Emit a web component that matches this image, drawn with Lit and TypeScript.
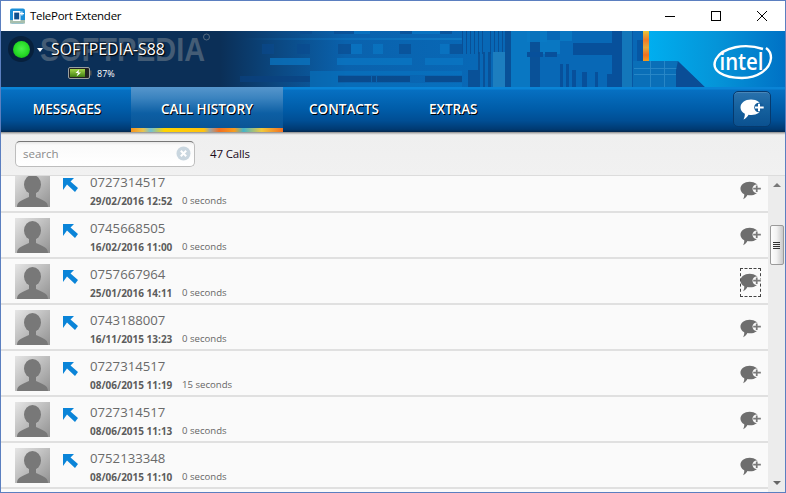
import { LitElement, html, css, svg } from "lit";
import { customElement } from "lit/decorators.js";

const ROWS = [
  ["0727314517", "29/02/2016 12:52", "0 seconds"],
  ["0745668505", "16/02/2016 11:00", "0 seconds"],
  ["0757667964", "25/01/2016 14:11", "0 seconds"],
  ["0743188007", "16/11/2015 13:23", "0 seconds"],
  ["0727314517", "08/06/2015 11:19", "15 seconds"],
  ["0727314517", "08/06/2015 11:13", "0 seconds"],
  ["0752133348", "08/06/2015 11:10", "0 seconds"],
];

const chat = (fill: string, cut: string, plus: string) => html`
  <svg class="chat-svg" viewBox="0 0 25 21">
    <path fill=${fill} d="M11 0.5C17 0.5 21.5 4 21.5 8.5C21.5 13 17 16 11.5 16C10.5 16 9.5 16 8.5 15.7C7.5 17.5 5.5 19.8 3.5 20.5C4.5 18.5 5 16.5 4.8 14.8C2 13.3 0.5 11 0.5 8.5C0.5 4 5 0.5 11 0.5Z"/>
    <circle cx="19" cy="8.5" r="4.8" fill=${cut}/>
    <path fill=${plus} d="M18 4.800H20V7.500H23.700V9.500H20V12.200H18V9.500H15V7.500H18Z"/>
  </svg>`;

const rects = (fill: string, op: number, list: number[][]) =>
  list.map(([x, y, w, h]) => svg`<rect x=${x} y=${y} width=${w} height=${h} fill=${fill} opacity=${op}/>`);

@customElement("app-root")
export class AppRoot extends LitElement {
  static styles = css`
    :host {
      display: flex;
      flex-direction: column;
      width: 786px;
      height: 493px;
      box-sizing: border-box;
      border: 1px solid #5b7fc0;
      background: #fafafa;
      font-family: "Open Sans", "Noto Sans", sans-serif;
      overflow: hidden;
    }
    .titlebar {
      height: 30px;
      flex: none;
      display: flex;
      align-items: center;
      background: #fff;
      padding-left: 9px;
      font-size: 11.5px;
      letter-spacing: -0.28px;
      color: #000;
    }
    .app-icon { width: 15px; height: 16px; margin-right: 5px; margin-top: -1px; }
    .title { flex: 1; margin-top: -1px; }
    .winctl { width: 46px; height: 30px; display: flex; align-items: center; justify-content: center; }
    .winctl svg { width: 12px; height: 12px; }
    .winctl-group { display: flex; margin-right: 0; }

    .banner {
      position: relative;
      height: 56px;
      flex: none;
      box-sizing: border-box;
      padding: 7px 0 0 7px;
      color: #fff;
      background: #0b2f57;
    }
    .banner-art { position: absolute; left: -1px; top: 0; width: 786px; height: 56px; }
    .device { position: relative; display: flex; align-items: center; height: 22px; }
    .led {
      width: 26px; height: 26px; border-radius: 50%;
      background: #07203c;
      display: flex; align-items: center; justify-content: center;
      margin-right: 1px;
    }
    .led i {
      width: 17px; height: 17px; border-radius: 50%; display: block;
      background: radial-gradient(circle at 50% 45%, #4cf04c 0, #25d925 55%, #119a11 100%);
    }
    .caret {
      width: 0; height: 0; margin: 2px 8px 0 2px;
      border-left: 3.5px solid transparent; border-right: 3.5px solid transparent;
      border-top: 4px solid #fff;
    }
    .name {
      font-size: 15.8px; font-weight: 400;
      text-shadow: 1px 1px 1px #000, 0 0 2px #000;
    }
    .power { position: relative; display: flex; align-items: center; margin: 7px 0 0 60px; font-size: 9px; height: 12px; }
    .power svg { width: 24px; height: 12px; margin-right: 5px; }

    .nav {
      height: 45px;
      flex: none;
      display: flex;
      align-items: stretch;
      padding-left: 0;
      background: linear-gradient(#0a84d6 0, #0a84d6 2px, #0670c2 3px, #005ca8 50%, #004e94 75%, #003a72 94%, #04284e 100%);
    }
    .tab {
      display: flex; align-items: center; justify-content: center;
      font-size: 13.5px; font-weight: 600; color: #fff;
      letter-spacing: 0;
      text-shadow: 1px 1px 0 #000;
      box-sizing: border-box;
      padding-bottom: 1px;
    }
    .t1 { margin-left: 31px; margin-right: 29px; width: 70px; }
    .t2 {
      width: 152px; position: relative;
      background: linear-gradient(#5696cc 0, #3a83bf 25%, #0d5fa4 58%, #0a5596 90%);
    }
    .t2::after {
      content: ""; position: absolute; left: 0; right: 0; bottom: 0; height: 4px;
      background: linear-gradient(90deg, #f7941d 0, #e9c34d 8%, #6fc1d6 13%, #ffd400 22%, #ffc20e 48%, #9aa5a8 52%, #f26f21 58%, #f79c1d 68%, #43b5c9 74%, #f1c93b 86%, #f26f21 100%);
    }
    .t3 { margin-left: 26px; margin-right: 50px; width: 70px; }
    .spacer { flex: 1; }
    .compose {
      width: 38px; height: 36px; margin: 4px 14px 0 0;
      box-sizing: border-box;
      border: 1px solid #063a6e; border-radius: 5px;
      background: linear-gradient(#2a72ad 0, #16629f 45%, #0b5190 100%);
      box-shadow: inset 0 1px 0 rgba(255,255,255,.15);
      display: flex; align-items: center; justify-content: center;
    }
    .compose .chat-svg { width: 25px; height: 21px; }

    .toolbar {
      height: 44px;
      flex: none;
      box-sizing: border-box;
      display: flex;
      align-items: center;
      padding: 0 0 0 14px;
      background: linear-gradient(#8a8a8a 0, #d8d8d8 2px, #efefef 3px, #f1f1f1 100%);
      border-bottom: 1px solid #dcdcdc;
    }
    .search {
      width: 180px; height: 26px;
      box-sizing: border-box;
      display: flex; align-items: center; justify-content: space-between;
      padding: 0 3px 0 7px;
      border: 1px solid #bdbdbd; border-top-color: #777; border-radius: 5px;
      background: linear-gradient(#e8e8e8 0, #fafafa 3px, #fff 100%);
      font-size: 11.5px; color: #8b8b8b;
    }
    .search svg { width: 15px; height: 15px; }
    .count { margin-left: 15px; font-size: 11.5px; color: #1a0a1a; letter-spacing: -0.15px; }

    .body { flex: 1; display: flex; min-height: 0; }
    .list { flex: 1; overflow: hidden; }
    .rows { margin-top: -9px; }
    .row {
      height: 46px;
      box-sizing: border-box;
      display: flex;
      align-items: flex-start;
      padding: 5px 6px 0 14px;
      border-bottom: 2px solid #e0e0e0;
      background: #fafafa;
      color: #666;
    }
    .avatar { width: 35px; height: 35px; flex: none; margin-right: 13px; }
    .dir { width: 15px; height: 14px; flex: none; margin: 6px 12px 0 0; }
    .info { flex: 1; }
    .num { font-size: 13.2px; line-height: 18px; color: #6a6a6a; margin-top: 1px; }
    .meta { display: flex; font-size: 9.6px; line-height: 14px; margin-top: 3px; color: #666; }
    .date { font-weight: 700; font-size: 10px; width: 92px; color: #5c5c5c; }
    .act {
      width: 21px; height: 29px; flex: none;
      box-sizing: border-box;
      display: flex; align-items: center; justify-content: center;
      margin: 4px 1px 0 0;
      border: 1px dashed transparent;
      padding-top: 0;
    }
    .act.focus { border-color: #444; }
    .act .chat-svg { width: 22px; height: 19px; flex: none; margin-left: 1px; }

    .scroll {
      width: 17px; flex: none; position: relative;
      background: #ececec;
      display: flex; flex-direction: column; align-items: center;
    }
    .up, .down { width: 0; height: 0; border-left: 4px solid transparent; border-right: 4px solid transparent; }
    .up { border-bottom: 4px solid #777; margin-top: 7px; }
    .down { border-top: 4px solid #666; margin-top: 216px; }
    .thumb {
      width: 14px; height: 40px; margin-top: 38px;
      box-sizing: border-box;
      border: 1px solid #9a9a9a; border-radius: 2px;
      background: linear-gradient(90deg, #fdfdfd 0, #f2f2f2 45%, #c9c9c9 100%);
      display: flex; flex-direction: column; align-items: center; justify-content: center; gap: 1px;
    }
    .thumb i { width: 7px; height: 1px; background: #333; display: block; }
  `;

  private bannerArt() {
    return svg`
      <svg class="banner-art" viewBox="0 31 786 56">
        <defs>
          <linearGradient id="base" x1="0" x2="1" y1="0" y2="0">
            <stop offset="0.28" stop-color="#0b2f57"/>
            <stop offset="0.36" stop-color="#0b4a85"/>
            <stop offset="0.44" stop-color="#0a62ad"/>
            <stop offset="0.6" stop-color="#0868b6"/>
            <stop offset="1" stop-color="#0868b6"/>
          </linearGradient>
          <linearGradient id="cyan" x1="0" x2="1" y1="0" y2="0">
            <stop offset="0" stop-color="#00aeef"/>
            <stop offset="0.5" stop-color="#0594d8"/>
            <stop offset="1" stop-color="#0071c5"/>
          </linearGradient>
          <linearGradient id="hot" x1="0" x2="0" y1="0" y2="1">
            <stop offset="0" stop-color="#e8c53a"/>
            <stop offset="0.3" stop-color="#f07a28"/>
            <stop offset="0.55" stop-color="#e4a83a"/>
            <stop offset="0.8" stop-color="#f0701f"/>
            <stop offset="1" stop-color="#f59c1a"/>
          </linearGradient>
          <linearGradient id="fade" x1="0" x2="1" y1="0" y2="0">
            <stop offset="0" stop-color="#0f78c2" stop-opacity="0"/>
            <stop offset="1" stop-color="#0f78c2" stop-opacity="1"/>
          </linearGradient>
        </defs>
        <rect x="0" y="31" width="786" height="56" fill="url(#base)"/>
        <text x="40" y="61" font-family="Liberation Sans" font-weight="700" font-size="34" textLength="165" lengthAdjust="spacingAndGlyphs" fill="#74818f" opacity="0.55">SOFTPEDIA</text>
        <circle cx="206.5" cy="37" r="3" fill="none" stroke="#74818f" stroke-width="1" opacity="0.7"/>
        <rect x="240" y="38" width="222" height="2" fill="url(#fade)"/>
        ${rects("#0a4a8e", 0.6, [[262, 44, 12, 10], [297, 44, 13, 10], [338, 44, 13, 10], [399, 44, 12, 10], [450, 44, 12, 10], [300, 31, 12, 3], [334, 31, 20, 3], [400, 31, 12, 3], [440, 31, 12, 3]])}
        ${rects("#0a77c4", 0.7, [[351, 44, 11, 10], [373, 44, 10, 10], [440, 44, 9, 10], [337, 58, 75, 7], [425, 58, 38, 7], [270, 58, 40, 7], [354, 31, 16, 3], [412, 31, 28, 3]])}
        ${rects("#0a4180", 0.7, [[240, 76, 70, 6], [338, 76, 33, 6], [372, 76, 4, 6], [377, 76, 33, 6], [425, 76, 37, 6]])}
        ${rects("#0877c2", 0.55, [[338, 71, 124, 4], [338, 83, 124, 4], [310, 71, 28, 16]])}
        ${rects("#0a4a8e", 0.8, [[462, 31, 1, 23], [466, 31, 1, 23], [470, 31, 1, 23], [474, 31, 1, 23], [478, 31, 1, 23], [482, 31, 1, 23], [490, 31, 1, 23], [494, 31, 1, 23], [498, 31, 1, 23], [502, 31, 1, 23]])}
        ${rects("#0a4a8e", 0.75, [[478, 52, 2, 35], [483, 52, 2, 35], [488, 52, 3, 35], [505, 31, 6, 56], [530, 31, 10, 56], [468, 70, 10, 17]])}
        ${rects("#1f80c0", 0.95, [[493, 52, 12, 35]])}
        ${rects("#0a7ac6", 0.8, [[511, 31, 19, 56], [540, 40, 20, 14], [560, 31, 12, 10], [527, 31, 20, 11]])}
        ${rects("#07509b", 1, [[573, 43, 39, 12], [612, 31, 10, 56], [527, 52, 16, 5], [545, 52, 12, 5], [560, 64, 3, 23], [566, 64, 3, 23], [572, 70, 4, 17], [582, 72, 5, 15], [595, 72, 3, 15], [607, 74, 5, 13]])}
        ${rects("#1377ba", 1, [[622, 31, 10, 56]])}
        ${rects("#07509b", 0.7, [[632, 31, 1, 56], [637, 40, 6, 21]])}
        <rect x="633" y="61" width="72" height="26" fill="#0a6fb8"/>
        ${rects("#2a88c8", 0.9, [[634, 68, 44, 1], [634, 74, 54, 1], [650, 61, 1, 26], [664, 61, 1, 26]])}
        <polygon points="678,61 705,87 676,87 676,70" fill="#0a4d96"/>
        <polygon points="649,31 786,31 786,87 705,87 678,61 649,61" fill="url(#cyan)"/>
        <rect x="643" y="31" width="6" height="30" fill="url(#hot)"/>
        <text x="719.5" y="70" font-family="Open Sans" font-weight="600" font-size="23.5" textLength="44" lengthAdjust="spacingAndGlyphs" fill="#fff">intel</text>
        <path d="M763 49C745 43 723 47 716 59C710 71 724 78 742 78C757 78 770 70 771 58C771 54 769 50 766 48" fill="none" stroke="#fff" stroke-width="2.4"/>
      </svg>`;
  }

  render() {
    return html`
      <div class="titlebar">
        <svg class="app-icon" viewBox="0 0 15 16">
          <rect x="0" y="0.5" width="15" height="15" rx="2" fill="#1a8fd8"/>
          <rect x="0" y="12" width="15" height="3.5" fill="#a8bfae"/>
          <rect x="3" y="3" width="7.5" height="10" fill="#fff"/>
          <rect x="4.2" y="4.6" width="5" height="6.8" fill="#0d4f8f"/>
          <path d="M11.3 3.5H12.5V5H14V6.200H12.500V7.600H11.300V6.200H10V5H11.300Z" fill="#fff"/>
        </svg>
        <span class="title">TelePort Extender</span>
        <div class="winctl-group">
          <div class="winctl"><svg viewBox="0 0 12 12"><path d="M1 6.500H11" stroke="#000" stroke-width="1"/></svg></div>
          <div class="winctl"><svg viewBox="0 0 12 12"><rect x="1.500" y="1.500" width="9" height="9" fill="none" stroke="#000"/></svg></div>
          <div class="winctl"><svg viewBox="0 0 12 12"><path d="M1 1L11 11M11 1L1 11" stroke="#000" stroke-width="1"/></svg></div>
        </div>
      </div>

      <div class="banner">
        ${this.bannerArt()}
        <div class="device">
          <div class="led"><i></i></div>
          <span class="caret"></span>
          <span class="name">SOFTPEDIA-S88</span>
        </div>
        <div class="power">
          <svg viewBox="0 0 24 12">
            <defs>
              <linearGradient id="batt" x1="0" x2="0" y1="0" y2="1">
                <stop offset="0" stop-color="#a5d84a"/>
                <stop offset="1" stop-color="#3f7d12"/>
              </linearGradient>
            </defs>
            <rect x="0.500" y="0.500" width="21" height="11" rx="1.500" fill="#222" stroke="#9aa0a0"/>
            <rect x="22" y="3.500" width="1.500" height="5" fill="#555"/>
            <rect x="2" y="2" width="15" height="8" fill="url(#batt)"/>
            <path d="M11 2.500L7.500 6H10L8.500 9.500L13 5.500H10.500Z" fill="#fff"/>
          </svg>
          <span>87%</span>
        </div>
      </div>

      <div class="nav">
        <div class="tab t1">MESSAGES</div>
        <div class="tab t2">CALL HISTORY</div>
        <div class="tab t3">CONTACTS</div>
        <div class="tab">EXTRAS</div>
        <div class="spacer"></div>
        <div class="compose">${chat("#fff", "#145c9a", "#fff")}</div>
      </div>

      <div class="toolbar">
        <div class="search">
          <span>search</span>
          <svg viewBox="0 0 15 15">
            <circle cx="7.500" cy="7.500" r="7" fill="#c9d6df"/>
            <path d="M4.800 4.800L10.200 10.200M10.200 4.800L4.800 10.200" stroke="#fff" stroke-width="2"/>
          </svg>
        </div>
        <span class="count">47 Calls</span>
      </div>

      <div class="body">
        <div class="list">
          <div class="rows">
            ${ROWS.map(
              (r, i) => html`
                <div class="row">
                  <svg class="avatar" viewBox="0 0 35 35">
                    <defs>
                      <linearGradient id="av" x1="0" x2="1" y1="0" y2="1">
                        <stop offset="0" stop-color="#e6e6e6"/>
                        <stop offset="1" stop-color="#929292"/>
                      </linearGradient>
                    </defs>
                    <rect width="35" height="35" fill="url(#av)"/>
                    <ellipse cx="17.500" cy="12.500" rx="8.500" ry="9.500" fill="#787878"/>
                    <path d="M2 35C2 29 8 28 14 25V20H21V25C27 28 33 29 33 35Z" fill="#787878"/>
                  </svg>
                  <svg class="dir" viewBox="0 0 15 14">
                    <polygon points="0,0 11,0 7.500,3.500 15,10 12,14 4,6.500 0,12" fill="#0a84d8"/>
                  </svg>
                  <div class="info">
                    <div class="num">${r[0]}</div>
                    <div class="meta"><span class="date">${r[1]}</span><span>${r[2]}</span></div>
                  </div>
                  <div class="act ${i === 2 ? "focus" : ""}">${chat("#6e6e6e", "#fafafa", "#7a7a7a")}</div>
                </div>
              `,
            )}
          </div>
        </div>
        <div class="scroll">
          <span class="up"></span>
          <div class="thumb"><i></i><i></i><i></i><i></i></div>
          <span class="down"></span>
        </div>
      </div>
    `;
  }
}
